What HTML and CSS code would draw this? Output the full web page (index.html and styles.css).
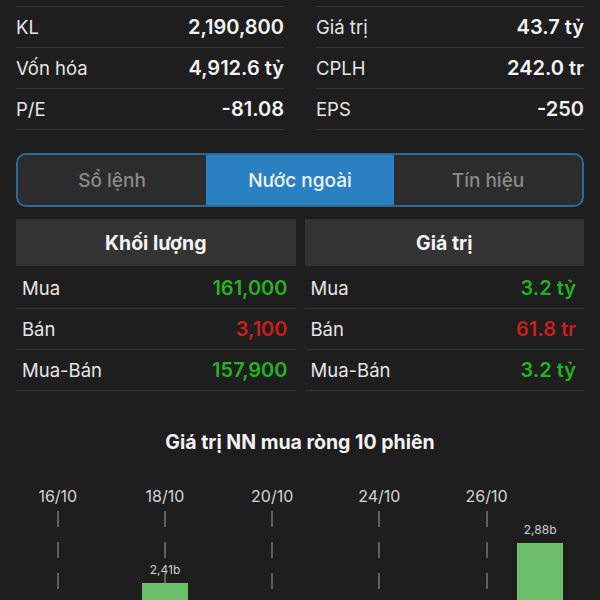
FILE: index.html
```html
<!DOCTYPE html>
<html lang="vi">
<head>
    <meta charset="UTF-8">
    <meta name="viewport" content="width=device-width, initial-scale=1.0">
    <title>Nước ngoài</title>
    <link rel="stylesheet" href="styles.css">
</head>
<body>
    <div class="stats">
        <div class="stats-col">
            <div class="stat"><span class="stat-label">KL</span><span class="stat-value">2,190,800</span></div>
            <div class="stat"><span class="stat-label">Vốn hóa</span><span class="stat-value">4,912.6 tỷ</span></div>
            <div class="stat"><span class="stat-label">P/E</span><span class="stat-value">-81.08</span></div>
        </div>
        <div class="stats-col">
            <div class="stat"><span class="stat-label">Giá trị</span><span class="stat-value">43.7 tỷ</span></div>
            <div class="stat"><span class="stat-label">CPLH</span><span class="stat-value">242.0 tr</span></div>
            <div class="stat"><span class="stat-label">EPS</span><span class="stat-value">-250</span></div>
        </div>
    </div>

    <div class="tabs">
        <div class="tab">Sổ lệnh</div>
        <div class="tab active">Nước ngoài</div>
        <div class="tab">Tín hiệu</div>
    </div>

    <div class="foreign">
        <div class="table">
            <div class="table-head">Khối lượng</div>
            <div class="row"><span>Mua</span><span class="up">161,000</span></div>
            <div class="row"><span>Bán</span><span class="down">3,100</span></div>
            <div class="row"><span>Mua-Bán</span><span class="up">157,900</span></div>
        </div>
        <div class="table">
            <div class="table-head">Giá trị</div>
            <div class="row"><span>Mua</span><span class="up">3.2 tỷ</span></div>
            <div class="row"><span>Bán</span><span class="down">61.8 tr</span></div>
            <div class="row"><span>Mua-Bán</span><span class="up">3.2 tỷ</span></div>
        </div>
    </div>

    <h2 class="chart-title">Giá trị NN mua ròng 10 phiên</h2>
    <div class="chart">
        <div class="col">
            <div class="date">16/10</div>
            <div class="plot dashed"></div>
        </div>
        <div class="col">
            <div class="date"></div>
            <div class="plot"></div>
        </div>
        <div class="col">
            <div class="date">18/10</div>
            <div class="plot dashed">
                <span class="bar-value">2,41b</span>
                <div class="bar" style="height: 205px"></div>
            </div>
        </div>
        <div class="col">
            <div class="date"></div>
            <div class="plot"></div>
        </div>
        <div class="col">
            <div class="date">20/10</div>
            <div class="plot dashed"></div>
        </div>
        <div class="col">
            <div class="date"></div>
            <div class="plot"></div>
        </div>
        <div class="col">
            <div class="date">24/10</div>
            <div class="plot dashed"></div>
        </div>
        <div class="col">
            <div class="date"></div>
            <div class="plot"></div>
        </div>
        <div class="col">
            <div class="date">26/10</div>
            <div class="plot dashed"></div>
        </div>
        <div class="col">
            <div class="date"></div>
            <div class="plot">
                <span class="bar-value">2,88b</span>
                <div class="bar" style="height: 245px"></div>
            </div>
        </div>
    </div>
</body>
</html>
```

FILE: styles.css
```css
body {
    margin: 0;
    background-color: #1e1e1e;
    color: #f2f2f2;
    font-family: Inter, "Noto Sans", sans-serif;
    font-size: 18.5px;
}
.stats {
    display: flex;
    gap: 32px;
    padding: 0 16px;
    margin-top: 6px;
}
.stats-col {
    flex: 1;
    border-top: 1px solid #343434;
}
.stat {
    height: 40px;
    display: flex;
    align-items: center;
    justify-content: space-between;
    border-bottom: 1px solid #343434;
}
.stat-label {
    color: #e6e6e6;
}
.stat-value {
    font-size: 20px;
    font-weight: 600;
    color: #f4f4f4;
}
.tabs {
    display: flex;
    margin: 23px 16px 0;
    height: 50px;
    border: 2px solid #2a6b9e;
    border-radius: 10px;
    overflow: hidden;
    background-color: #2c2c2c;
}
.tab {
    flex: 1;
    display: flex;
    align-items: center;
    justify-content: center;
    font-size: 19px;
    color: #8a8a8a;
    font-weight: 500;
}
.tab.active {
    background-color: #2b80c2;
    color: #eef5fb;
}
.foreign {
    display: flex;
    gap: 9px;
    margin: 12px 16px 0;
}
.table {
    flex: 1;
}
.table-head {
    height: 47px;
    margin-bottom: 2px;
    display: flex;
    align-items: center;
    justify-content: center;
    background-color: #333;
    font-size: 19.5px;
    font-weight: 700;
    color: #f4f4f4;
}
.row {
    height: 40px;
    display: flex;
    align-items: center;
    justify-content: space-between;
    padding: 0 8px 0 6px;
    border-bottom: 1px solid #343434;
    color: #e6e6e6;
}
.row span:last-child {
    font-size: 20px;
    font-weight: 600;
}
.up {
    color: #23b223;
}
.down {
    color: #cc1d1d;
}
.chart-title {
    margin: 39px 0 0;
    text-align: center;
    font-size: 19.5px;
    font-weight: 700;
    line-height: 24px;
    color: #f2f2f2;
}
.chart {
    display: flex;
    padding-left: 31px;
    width: 536px;
    margin-top: 32px;
}
.col {
    flex: 1;
    display: flex;
    flex-direction: column;
    align-items: center;
}
.date {
    height: 20px;
    line-height: 20px;
    font-size: 16px;
    color: #d4d4d4;
    margin-bottom: 5px;
}
.plot {
    align-self: stretch;
    height: 277px;
    display: flex;
    flex-direction: column;
    justify-content: flex-end;
    align-items: center;
}
.plot.dashed {
    background-image: repeating-linear-gradient(to bottom, #5e5e5e 0 16px, transparent 16px 31px);
    background-size: 2px 100%;
    background-position: center top;
    background-repeat: no-repeat;
}
.bar-value {
    font-size: 12px;
    line-height: 16px;
    color: #cfcfcf;
    margin-bottom: 5px;
}
.bar {
    width: 46px;
    background-color: #6cbf6a;
}
```
